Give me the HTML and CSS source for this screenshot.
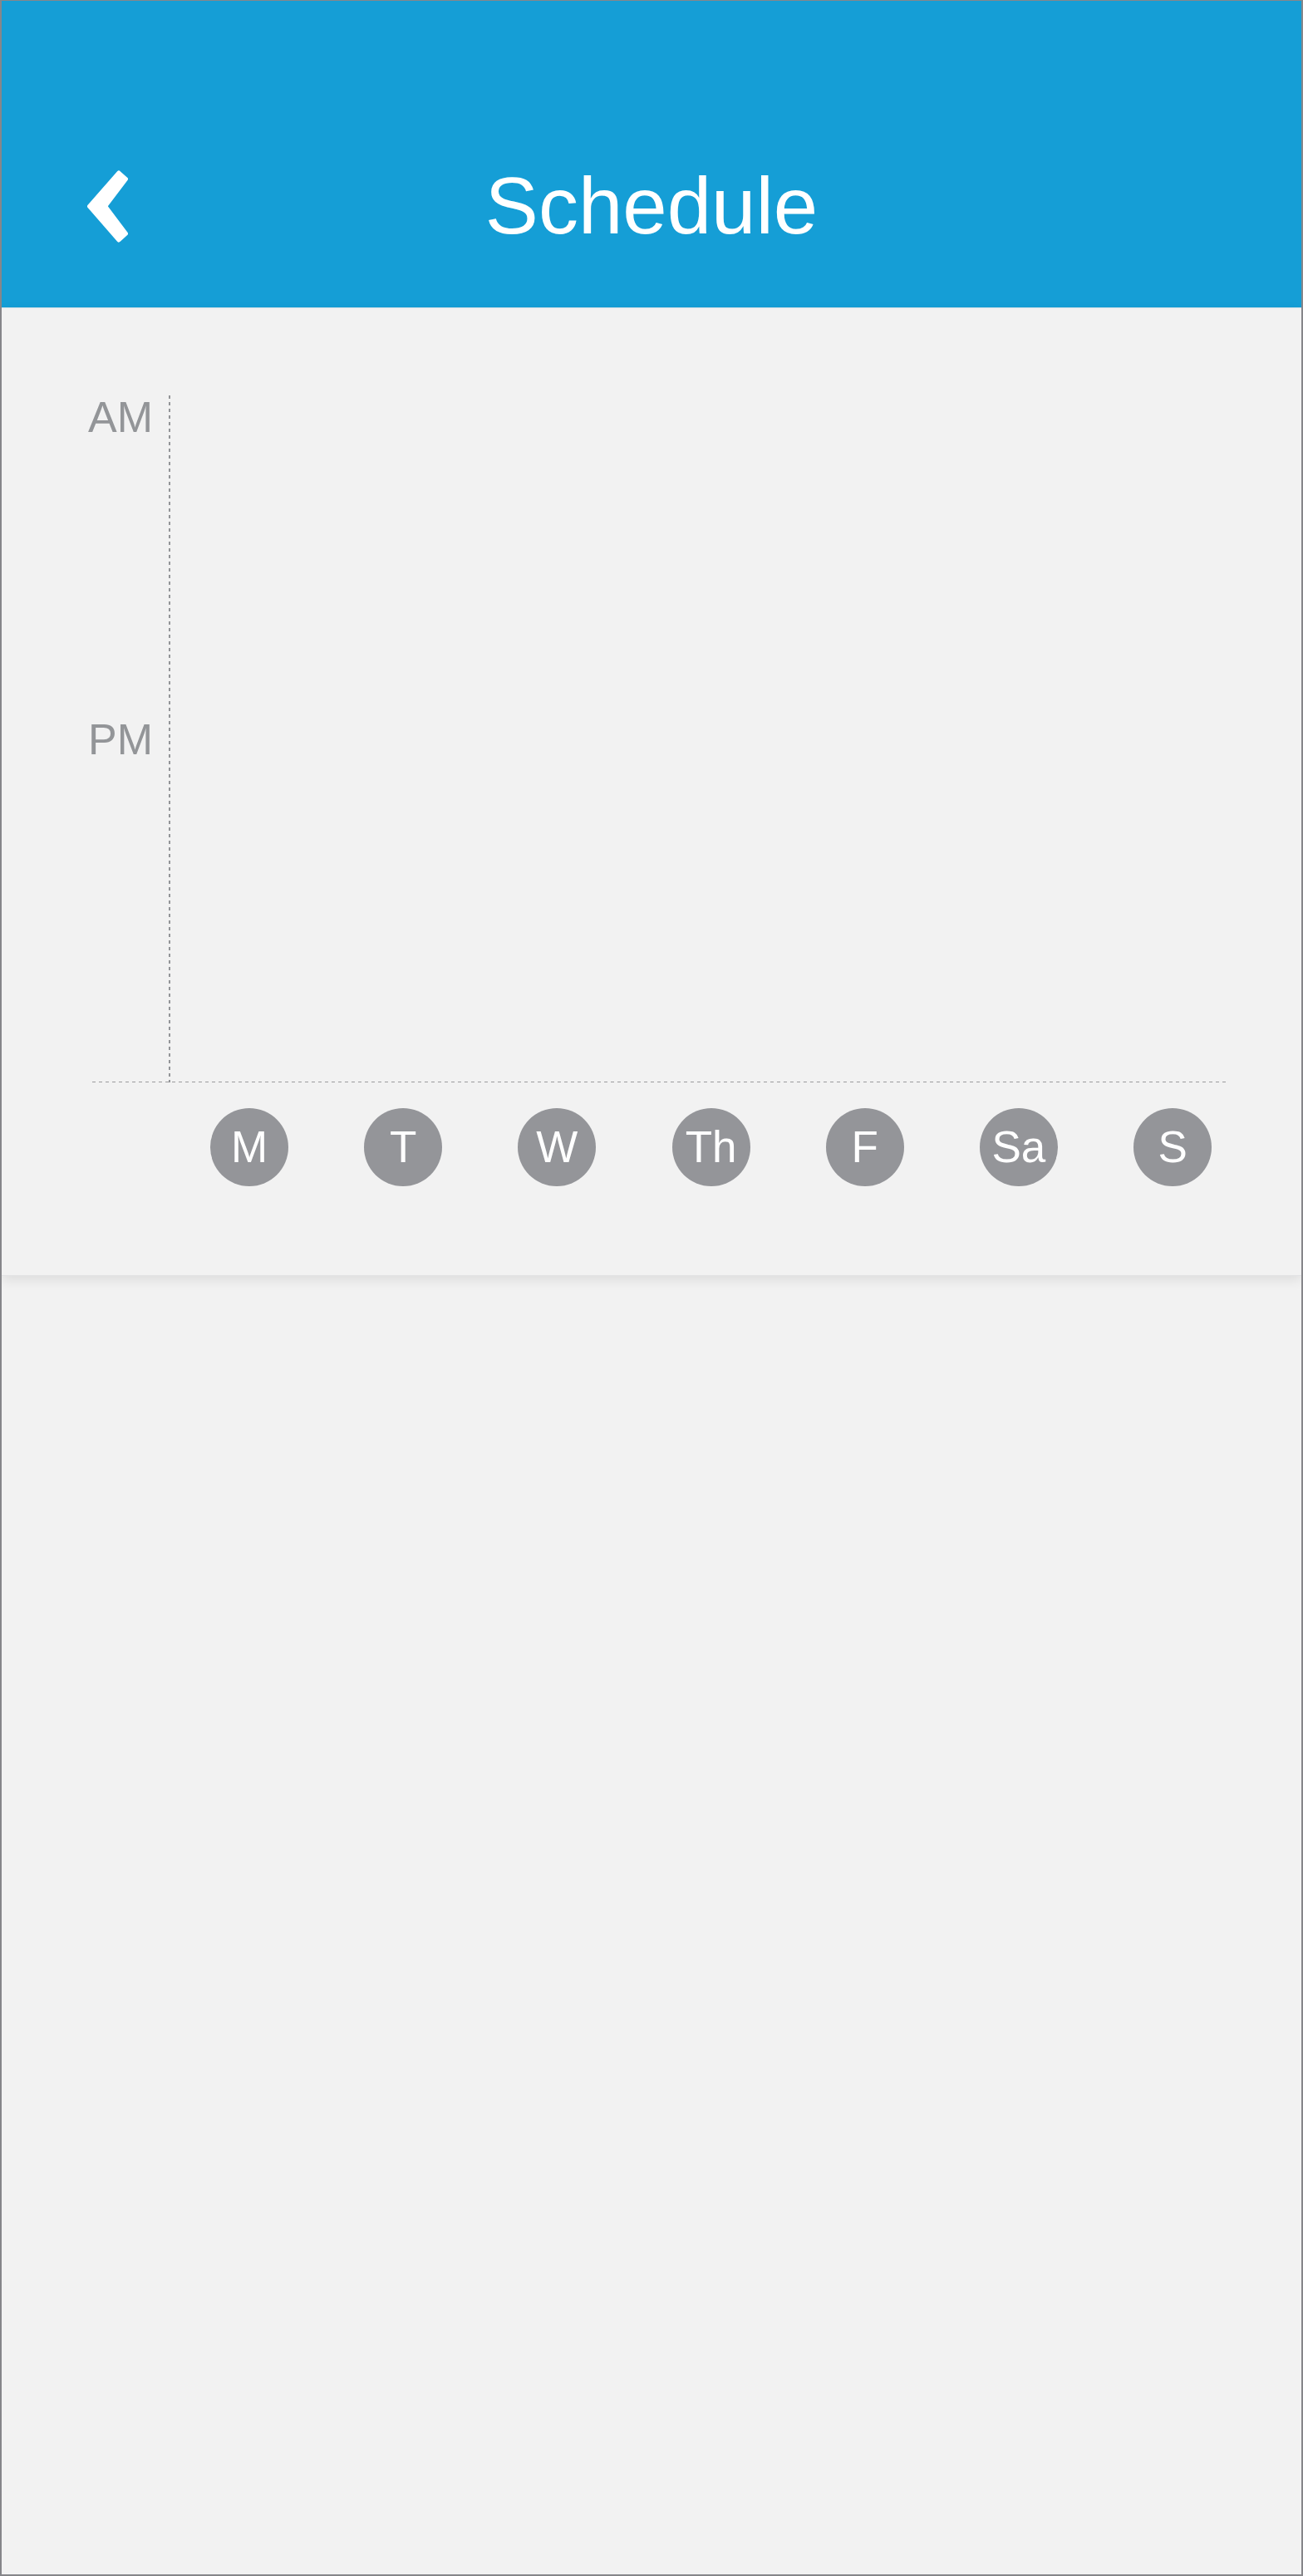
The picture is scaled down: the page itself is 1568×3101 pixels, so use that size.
FILE: index.html
```html
<!DOCTYPE html>
<html lang="en">
<head>
<meta charset="utf-8">
<title>Schedule</title>
<link rel="stylesheet" href="styles.css">
</head>
<body>
<div class="frame">
  <header class="topbar">
    <button class="back" aria-label="Back">
      <svg width="49" height="87" viewBox="0 0 49 87" aria-hidden="true">
        <polygon points="2.5,43.3 38,3 46.5,10.5 21.7,43.3 46.5,76.2 38,84" fill="#ffffff" stroke="#ffffff" stroke-width="5" stroke-linejoin="round"/>
      </svg>
    </button>
    <h1 class="title">Schedule</h1>
    <div class="spacer"></div>
  </header>

  <section class="chart">
    <div class="plot">
      <div class="labels">
        <div class="label">AM</div>
        <div class="label label-pm">PM</div>
      </div>
      <div class="yaxis"></div>
    </div>
    <div class="xaxis"></div>
    <div class="days">
      <div class="day">M</div>
      <div class="day">T</div>
      <div class="day">W</div>
      <div class="day">Th</div>
      <div class="day">F</div>
      <div class="day">Sa</div>
      <div class="day">S</div>
    </div>
  </section>
</div>
</body>
</html>
```

FILE: styles.css
```css
html, body {
  margin: 0;
  padding: 0;
}

body {
  background: #f2f2f2;
  font-family: "Liberation Sans", Arial, sans-serif;
}

.frame {
  box-sizing: border-box;
  width: 1568px;
  height: 3101px;
  border-top: 1px solid #86868a;
  border-left: 2px solid #86868a;
  border-right: 2px solid #86868a;
  border-bottom: 2px solid #86868a;
  background: #f2f2f2;
  overflow: hidden;
}

.topbar {
  box-sizing: border-box;
  height: 370px;
  padding-top: 192px;
  background: #159ed6;
  border-bottom: 1px solid #cfe3ec;
  display: grid;
  grid-template-columns: 1fr auto 1fr;
  align-items: start;
}

.back {
  justify-self: start;
  margin: 12px 0 0 103px;
  padding: 0;
  border: 0;
  background: none;
  width: 49px;
  height: 87px;
  display: block;
}

.back svg {
  display: block;
}

.title {
  margin: 0;
  font-size: 96px;
  line-height: 110px;
  font-weight: 400;
  color: #ffffff;
  white-space: nowrap;
}

.chart {
  background: #f2f2f2;
  padding: 105px 0 107px;
  box-shadow: 0 5px 14px rgba(0, 0, 0, 0.09);
  border-bottom: 1px solid #e2e2e4;
  position: relative;
}

.plot {
  display: flex;
  margin-left: 60px;
  height: 826px;
}

.labels {
  width: 141px;
  box-sizing: border-box;
  padding-right: 19px;
  text-align: right;
}

.label {
  font-size: 52px;
  line-height: 52px;
  height: 52px;
  color: #939598;
}

.label-pm {
  margin-top: 336px;
}

.yaxis {
  width: 2px;
  height: 827px;
  background: repeating-linear-gradient(to bottom, #939598 0 4px, transparent 4px 8px);
}

.xaxis {
  margin-left: 109px;
  width: 1368px;
  height: 1px;
  background: repeating-linear-gradient(to right, #9a9a9d 0 4px, transparent 4px 8px);
}

.days {
  display: flex;
  gap: 91.2px;
  margin: 31px 0 0 251px;
}

.day {
  width: 94px;
  height: 94px;
  border-radius: 50%;
  background: #949599;
  color: #ffffff;
  font-size: 53px;
  line-height: 94px;
  text-align: center;
  flex: none;
}
```
